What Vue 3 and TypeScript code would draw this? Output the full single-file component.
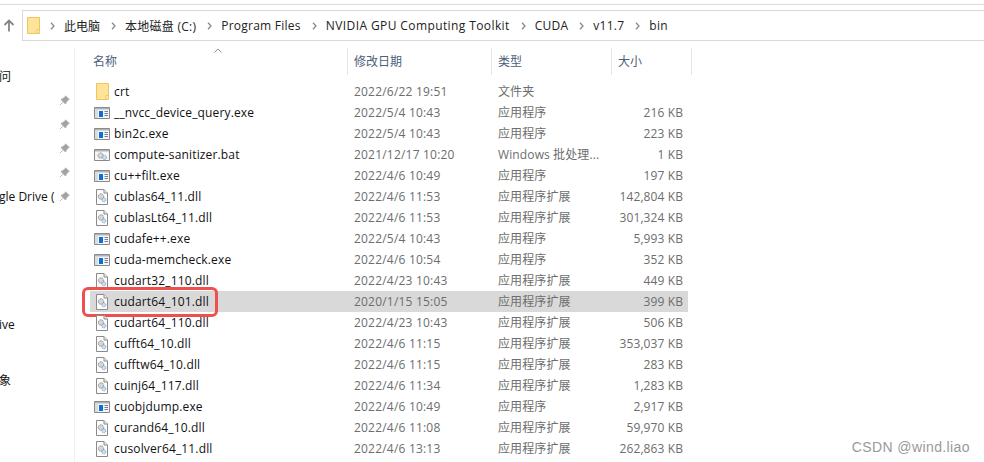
<script setup lang="ts">
type Kind = 'folder' | 'exe' | 'bat' | 'dll'
interface Row { name: string; date: string; type: string; size: string; kind: Kind; selected?: boolean }
const APP = '应用程序'
const EXT = '应用程序扩展'
const rows: Row[] = [
  { name: 'crt', date: '2022/6/22 19:51', type: '文件夹', size: '', kind: 'folder' },
  { name: '__nvcc_device_query.exe', date: '2022/5/4 10:43', type: APP, size: '216 KB', kind: 'exe' },
  { name: 'bin2c.exe', date: '2022/5/4 10:43', type: APP, size: '223 KB', kind: 'exe' },
  { name: 'compute-sanitizer.bat', date: '2021/12/17 10:20', type: 'Windows 批处理...', size: '1 KB', kind: 'bat' },
  { name: 'cu++filt.exe', date: '2022/4/6 10:49', type: APP, size: '197 KB', kind: 'exe' },
  { name: 'cublas64_11.dll', date: '2022/4/6 11:53', type: EXT, size: '142,804 KB', kind: 'dll' },
  { name: 'cublasLt64_11.dll', date: '2022/4/6 11:53', type: EXT, size: '301,324 KB', kind: 'dll' },
  { name: 'cudafe++.exe', date: '2022/5/4 10:43', type: APP, size: '5,993 KB', kind: 'exe' },
  { name: 'cuda-memcheck.exe', date: '2022/4/6 10:54', type: APP, size: '352 KB', kind: 'exe' },
  { name: 'cudart32_110.dll', date: '2022/4/23 10:43', type: EXT, size: '449 KB', kind: 'dll' },
  { name: 'cudart64_101.dll', date: '2020/1/15 15:05', type: EXT, size: '399 KB', kind: 'dll', selected: true },
  { name: 'cudart64_110.dll', date: '2022/4/23 10:43', type: EXT, size: '506 KB', kind: 'dll' },
  { name: 'cufft64_10.dll', date: '2022/4/6 11:15', type: EXT, size: '353,037 KB', kind: 'dll' },
  { name: 'cufftw64_10.dll', date: '2022/4/6 11:15', type: EXT, size: '283 KB', kind: 'dll' },
  { name: 'cuinj64_117.dll', date: '2022/4/6 11:34', type: EXT, size: '1,283 KB', kind: 'dll' },
  { name: 'cuobjdump.exe', date: '2022/4/6 10:49', type: APP, size: '2,917 KB', kind: 'exe' },
  { name: 'curand64_10.dll', date: '2022/4/6 11:08', type: EXT, size: '59,970 KB', kind: 'dll' },
  { name: 'cusolver64_11.dll', date: '2022/4/6 13:13', type: EXT, size: '262,863 KB', kind: 'dll' },
  { name: '', date: '', type: '', size: '', kind: 'dll' }
]
const crumbs = ['此电脑', '本地磁盘 (C:)', 'Program Files', 'NVIDIA GPU Computing Toolkit', 'CUDA', 'v11.7', 'bin']
const pinned = [
  { label: '问', pin: false, cls: '' },
  { label: '', pin: true, cls: '' },
  { label: '', pin: true, cls: '' },
  { label: '', pin: true, cls: '' },
  { label: '', pin: true, cls: '' },
  { label: 'gle Drive (', pin: true, cls: '' },
  { label: 'ive', pin: false, cls: 'gap-a' },
  { label: '象', pin: false, cls: 'gap-b' }
]
</script>

<template>
  <div class="window">
    <div class="top-rule"></div>
    <div class="nav">
      <svg class="up" width="12" height="13" viewBox="0 0 12 13">
        <path d="M6 12.500V1.500M1.500 6 6 1.500 10.500 6" fill="none" stroke="#858585" stroke-width="1.800" />
      </svg>
      <div class="address">
        <svg class="crumb-folder" width="13" height="17" viewBox="0 0 13 17">
          <path d="M.5.500h12v16H.5z" fill="#fde49a" stroke="#ecc75c" />
          <path d="M10 16.500v-4h2.500" fill="#fff3c8" stroke="#ecc75c" />
        </svg>
        <template v-for="(c, i) in crumbs" :key="c">
          <svg class="chev" width="5" height="8" viewBox="0 0 5 8">
            <path d="M1 .8 4 4 1 7.200" fill="none" stroke="#8a8a8a" stroke-width="1.300" />
          </svg>
          <span class="crumb" :class="{ cjk: i === 0, wide: i === 3 }">{{ c }}</span>
        </template>
      </div>
    </div>
    <div class="main">
      <aside class="side">
        <div v-for="(p, i) in pinned" :key="i" class="side-row" :class="p.cls">
          <span class="side-label">{{ p.label }}</span>
          <svg v-if="p.pin" class="pin" width="11" height="11" viewBox="0 0 11 11">
            <path d="M6.500.8 10.200 4.500 8.800 5 7 7.800 6.500 9 2 4.500 3.200 4 6 2.200zM3.800 7.200.8 10.200" fill="#a3a3a3" stroke="#a3a3a3" stroke-width=".8" />
          </svg>
        </div>
      </aside>
      <section class="list">
        <div class="head">
          <div class="hcell hname">名称
            <svg class="caret" width="8" height="5" viewBox="0 0 8 5"><path d="M.5 4.500 4 1l3.500 3.500" fill="none" stroke="#8f8f8f" /></svg>
          </div>
          <div class="hcell">修改日期</div>
          <div class="hcell">类型</div>
          <div class="hcell">大小</div>
        </div>
        <div v-for="(r, i) in rows" :key="i" class="row" :class="{ selected: r.selected }">
          <span class="icon">
            <svg v-if="r.kind === 'folder'" width="13" height="17" viewBox="0 0 13 17">
              <path d="M.5.500h12v16H.5z" fill="#fde49a" stroke="#ecc75c" />
              <path d="M10 16.500v-4h2.500" fill="#fff3c8" stroke="#ecc75c" />
            </svg>
            <svg v-else-if="r.kind === 'exe'" width="16" height="12" viewBox="0 0 16 12">
              <path d="M.5.500h15v11H.5z" fill="#f6f6f6" stroke="#8a8a8a" />
              <path d="M1 1h14v1.500H1z" fill="#aeb3b9" />
              <path d="M1 2.500h3V11H1z" fill="#dcdcdc" />
              <path d="M5 4h4v6H5z" fill="#0a6fd6" />
              <path d="M10.500 4.500h3.500M10.500 6.500h3.500M10.500 8.500h3.500" stroke="#6f8199" />
            </svg>
            <svg v-else-if="r.kind === 'bat'" width="16" height="12" viewBox="0 0 16 12">
              <path d="M.5.500h15v11H.5z" fill="#f7f7f7" stroke="#8a8a8a" />
              <path d="M1 1h14v1.500H1z" fill="#aeb3b9" />
              <circle cx="6.500" cy="6.500" r="2.600" fill="#d8d8d8" stroke="#8a8a8a" stroke-dasharray="1.500 .8" />
              <circle cx="10.500" cy="8.500" r="2" fill="#cfe0f2" stroke="#7d9cc0" stroke-dasharray="1.200 .6" />
            </svg>
            <svg v-else width="12" height="16" viewBox="0 0 12 16">
              <path d="M.5.500h7.500l3.500 3.500v11.500H.5z" fill="#fdfdfd" stroke="#8a8a8a" />
              <path d="M8 .5V4h3.500" fill="#eee" stroke="#8a8a8a" />
              <circle cx="5" cy="7.500" r="2.700" fill="#d6d6d6" stroke="#8a8a8a" stroke-dasharray="1.500 .8" />
              <circle cx="7.800" cy="10.800" r="2" fill="#cfe0f2" stroke="#7d9cc0" stroke-dasharray="1.200 .6" />
            </svg>
          </span>
          <span class="name">{{ r.name }}</span>
          <span class="date">{{ r.date }}</span>
          <span class="type">{{ r.type }}</span>
          <span class="size">{{ r.size }}</span>
          <span v-if="r.selected" class="mark"></span>
        </div>
      </section>
    </div>
    <div class="watermark">CSDN @wind.liao</div>
  </div>
</template>

<style>
html, body { margin: 0; background: #fff; overflow: hidden; }
</style>

<style scoped>
.window {
  position: relative;
  width: 984px;
  height: 462px;
  overflow: hidden;
  background: #fff;
  font-family: "Open Sans", "Noto Sans CJK SC", sans-serif;
  font-size: 12px;
  color: #111;
}
.top-rule { height: 1px; margin-top: 4px; background: #dcdcdc; }
.nav { display: flex; align-items: center; margin-top: 5px; }
.up { margin: 0 0 0 3px; flex: none; }
.address {
  display: flex;
  align-items: center;
  flex: 1;
  height: 29px;
  margin-left: 7px;
  padding-left: 4px;
  border: 1px solid #d9d9d9;
  border-right: 0;
}
.crumb-folder { margin-right: 10px; flex: none; }
.chev { margin-right: 9px; flex: none; }
.crumb { margin-right: 11px; white-space: nowrap; color: #222; letter-spacing: .25px; }
.cjk { letter-spacing: 0; }
.wide { letter-spacing: .4px; }
.main { display: flex; margin-top: 7px; }
.side { width: 75px; height: 414px; padding-top: 16px; box-sizing: border-box; border-right: 1px solid #f0f0f0; flex: none; }
.side-row { display: flex; align-items: center; height: 24px; position: relative; overflow: hidden; }
.side-label { white-space: nowrap; width: 56px; overflow: hidden; margin-left: -1px; flex: none; }
.pin { margin-left: 4px; flex: none; }
.gap-a { margin-top: 104px; }
.gap-b { margin-top: 32px; }
.list { margin-left: 15px; width: 602px; }
.head { display: grid; grid-template-columns: 258px 144px 120px 80px; height: 27px; margin-bottom: 6px; }
.hcell {
  position: relative;
  padding: 6px 0 0 6px;
  border-right: 1px solid #e5e5e5;
  color: #4c607a;
  line-height: 16px;
}
.hname { padding-left: 3px; }
.caret { position: absolute; left: 124px; top: 0; }
.row {
  position: relative;
  display: grid;
  grid-template-columns: 24px 240px 144px 120px 65px;
  align-items: center;
  width: 598px;
  height: 21px;
  line-height: 21px;
  white-space: nowrap;
}
.selected { background: #d9d9d9; }
.icon { display: flex; justify-content: center; align-items: center; height: 21px; }
.name { letter-spacing: .15px; }
.date { color: #6d6d6d; letter-spacing: .2px; }
.type { color: #6d6d6d; letter-spacing: .12px; }
.size { color: #6d6d6d; text-align: right; letter-spacing: .1px; }
.mark {
  position: absolute;
  left: -8px;
  top: -4px;
  width: 136px;
  height: 30px;
  box-sizing: border-box;
  border: 3px solid #f0504d;
  border-radius: 6px;
}
.watermark {
  position: absolute;
  right: 14px;
  bottom: 7px;
  color: #999;
  font-family: "Liberation Sans", sans-serif;
  font-size: 14px;
  letter-spacing: .4px;
}
</style>
